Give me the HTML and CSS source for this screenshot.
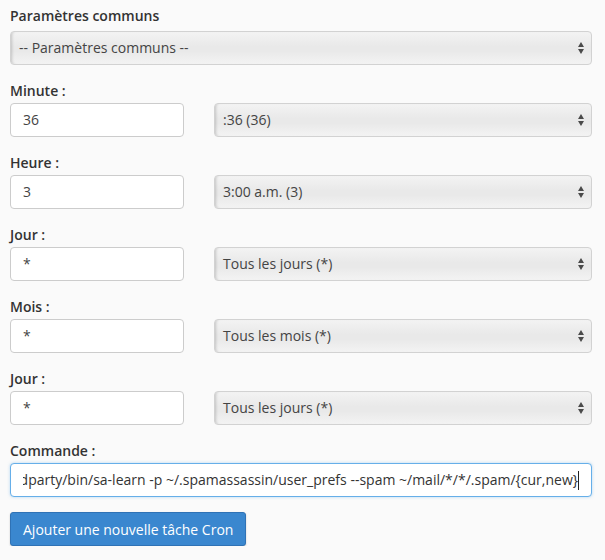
FILE: index.html
```html
<!DOCTYPE html>
<html lang="fr">
<head>
<meta charset="utf-8">
<title>Cron</title>
<link rel="stylesheet" href="styles.css">
</head>
<body>
<form class="cron-form">
  <div class="group group-first">
    <label class="label">Paramètres communs</label>
    <div class="select select-full"><span>-- Paramètres communs --</span><i class="arrows"></i></div>
  </div>

  <div class="group">
    <label class="label">Minute :</label>
    <div class="row">
      <div class="input">36</div>
      <div class="select"><span>:36 (36)</span><i class="arrows"></i></div>
    </div>
  </div>

  <div class="group">
    <label class="label">Heure :</label>
    <div class="row">
      <div class="input">3</div>
      <div class="select"><span>3:00 a.m. (3)</span><i class="arrows"></i></div>
    </div>
  </div>

  <div class="group">
    <label class="label">Jour :</label>
    <div class="row">
      <div class="input">*</div>
      <div class="select"><span>Tous les jours (*)</span><i class="arrows"></i></div>
    </div>
  </div>

  <div class="group">
    <label class="label">Mois :</label>
    <div class="row">
      <div class="input">*</div>
      <div class="select"><span>Tous les mois (*)</span><i class="arrows"></i></div>
    </div>
  </div>

  <div class="group">
    <label class="label">Jour :</label>
    <div class="row">
      <div class="input">*</div>
      <div class="select"><span>Tous les jours (*)</span><i class="arrows"></i></div>
    </div>
  </div>

  <div class="group">
    <label class="label">Commande :</label>
    <div class="input input-focus">
      <div class="scroller"><span class="cmd">/usr/local/cpanel/3rdparty/bin/sa-learn -p ~/.spamassassin/user_prefs --spam ~/mail/*/*/.spam/{cur,new}</span><span class="caret"></span></div>
    </div>
  </div>

  <button type="button" class="btn">Ajouter une nouvelle tâche Cron</button>
</form>
</body>
</html>
```
FILE: styles.css
```css
html, body {
  margin: 0;
  padding: 0;
  background: #fafafa;
}
body {
  font-family: "Open Sans", "DejaVu Sans", sans-serif;
  font-size: 14px;
  color: #333;
}
.cron-form {
  padding: 6px 13px 0 10px;
  display: flex;
  flex-direction: column;
}
.group {
  display: flex;
  flex-direction: column;
  margin-bottom: 16px;
}
.label {
  font-weight: 600;
  line-height: 20px;
  margin-bottom: 2px;
  color: #333;
}
.group-first .label {
  margin-bottom: 5px;
}
.row {
  display: flex;
  gap: 30px;
}
.input {
  box-sizing: border-box;
  height: 34px;
  width: 174px;
  flex: none;
  border: 1px solid #cccccc;
  border-radius: 4px;
  background: #fff;
  padding: 0 12px;
  line-height: 32px;
  color: #444;
}
.input-focus {
  width: auto;
  border-color: #66afe9;
  box-shadow: 0 0 3px rgba(102, 175, 233, 0.5);
  color: #333;
  padding: 0 12px 0 12px;
}
.scroller {
  overflow: hidden;
  display: flex;
  justify-content: flex-end;
  align-items: center;
  height: 32px;
}
.cmd {
  white-space: nowrap;
  flex: none;
}
.caret {
  flex: none;
  width: 1px;
  height: 19px;
  background: #222;
}
.select {
  position: relative;
  box-sizing: border-box;
  height: 34px;
  flex: 1;
  border: 1px solid #d2d2d2;
  border-radius: 4px;
  background: linear-gradient(#f3f3f3 0%, #e9e9e9 45%, #e9e9e9 60%, #f3f3f3 100%);
  box-shadow: inset 3px 0 3px -2px rgba(0, 0, 0, 0.18);
  padding: 0 8px;
  line-height: 32px;
  color: #444;
}
.select-full {
  flex: none;
}
.arrows {
  position: absolute;
  right: 7px;
  top: 9px;
  width: 6px;
  height: 13px;
}
.arrows::before,
.arrows::after {
  content: "";
  position: absolute;
  left: 0;
  border-left: 3px solid transparent;
  border-right: 3px solid transparent;
}
.arrows::before {
  top: 1px;
  border-bottom: 5px solid #4a4a4a;
}
.arrows::after {
  bottom: 0;
  border-top: 5px solid #4a4a4a;
}
.btn {
  align-self: flex-start;
  margin-top: -1px;
  height: 34px;
  box-sizing: border-box;
  padding: 0 12px;
  font-family: "Open Sans", "DejaVu Sans", sans-serif;
  font-size: 14px;
  color: #fff;
  background: #3a87cf;
  border: 1px solid #2f72b5;
  border-radius: 3px;
  box-shadow: 0 1px 2px rgba(0, 0, 0, 0.2);
  cursor: pointer;
}
```
